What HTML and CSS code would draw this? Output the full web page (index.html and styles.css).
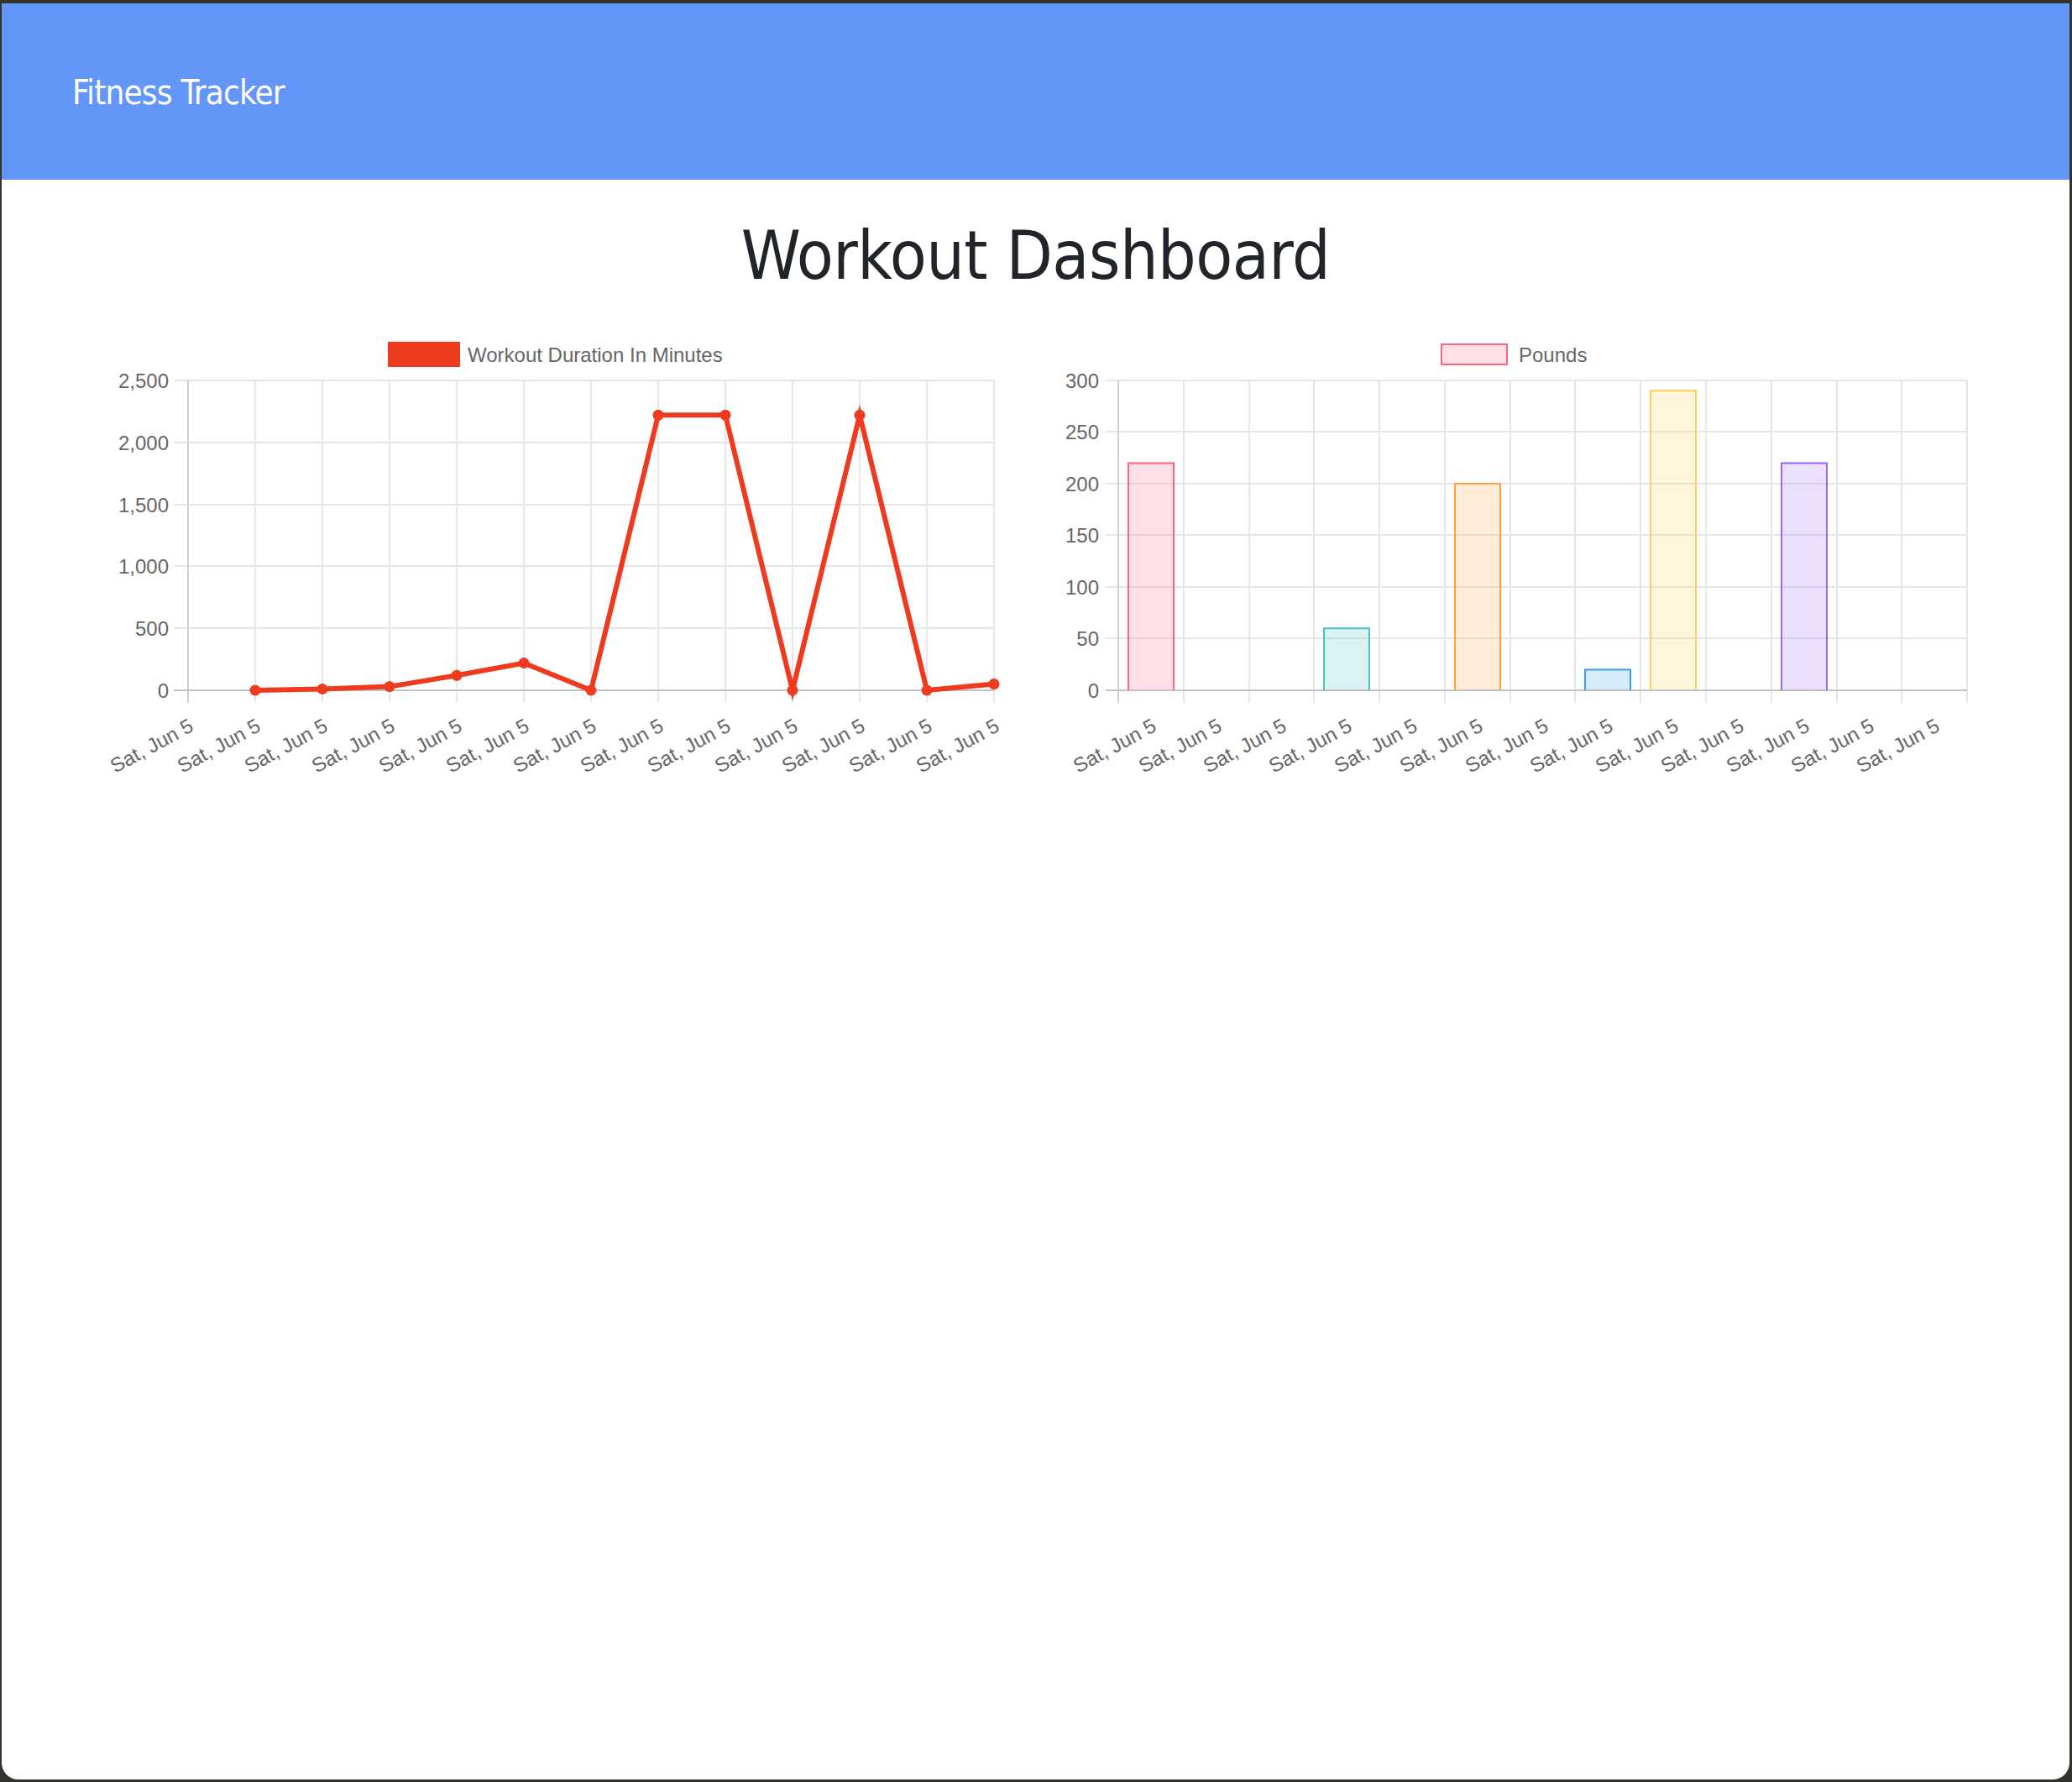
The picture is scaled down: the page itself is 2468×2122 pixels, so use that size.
FILE: index.html
```html
<!DOCTYPE html>
<html lang="en">
<head>
<meta charset="utf-8">
<title>Fitness Tracker</title>
<link rel="stylesheet" href="styles.css">
</head>
<body>
<div class="window">
  <nav class="navbar">
    <span class="brand">Fitness Tracker</span>
  </nav>
  <h1 class="title">Workout Dashboard</h1>
  <div class="charts">
    <svg class="chart" width="1080" height="540" viewBox="0 0 1080 540">
      <rect class="legend-line" x="341" y="20" width="80" height="24"/>
      <text class="legend-text" x="433" y="32">Workout Duration In Minutes</text>

      <g class="grid">
        <line x1="83" x2="1060" y1="63" y2="63"/>
        <line x1="83" x2="1060" y1="137" y2="137"/>
        <line x1="83" x2="1060" y1="211" y2="211"/>
        <line x1="83" x2="1060" y1="284" y2="284"/>
        <line x1="83" x2="1060" y1="358" y2="358"/>
        <line x1="180" x2="180" y1="63" y2="447"/>
        <line x1="260" x2="260" y1="63" y2="447"/>
        <line x1="340" x2="340" y1="63" y2="447"/>
        <line x1="420" x2="420" y1="63" y2="447"/>
        <line x1="500" x2="500" y1="63" y2="447"/>
        <line x1="580" x2="580" y1="63" y2="447"/>
        <line x1="660" x2="660" y1="63" y2="447"/>
        <line x1="740" x2="740" y1="63" y2="447"/>
        <line x1="820" x2="820" y1="63" y2="447"/>
        <line x1="900" x2="900" y1="63" y2="447"/>
        <line x1="980" x2="980" y1="63" y2="447"/>
        <line x1="1060" x2="1060" y1="63" y2="447"/>
      </g>
      <line class="grid-axis" x1="100" x2="100" y1="63" y2="447"/>
      <line class="grid-zero" x1="83" x2="1060" y1="432" y2="432"/>

      <g class="tick-y">
        <text x="77" y="63">2,500</text>
        <text x="77" y="137">2,000</text>
        <text x="77" y="211">1,500</text>
        <text x="77" y="284">1,000</text>
        <text x="77" y="358">500</text>
        <text x="77" y="432">0</text>
      </g>

      <g class="tick-x">
        <text transform="translate(104,472) rotate(-28.5)">Sat, Jun 5</text>
        <text transform="translate(184,472) rotate(-28.5)">Sat, Jun 5</text>
        <text transform="translate(264,472) rotate(-28.5)">Sat, Jun 5</text>
        <text transform="translate(344,472) rotate(-28.5)">Sat, Jun 5</text>
        <text transform="translate(424,472) rotate(-28.5)">Sat, Jun 5</text>
        <text transform="translate(504,472) rotate(-28.5)">Sat, Jun 5</text>
        <text transform="translate(584,472) rotate(-28.5)">Sat, Jun 5</text>
        <text transform="translate(664,472) rotate(-28.5)">Sat, Jun 5</text>
        <text transform="translate(744,472) rotate(-28.5)">Sat, Jun 5</text>
        <text transform="translate(824,472) rotate(-28.5)">Sat, Jun 5</text>
        <text transform="translate(904,472) rotate(-28.5)">Sat, Jun 5</text>
        <text transform="translate(984,472) rotate(-28.5)">Sat, Jun 5</text>
        <text transform="translate(1064,472) rotate(-28.5)">Sat, Jun 5</text>
      </g>

      <polyline class="series-line" points="180,432 260,430.5 340,427.6 420,414.3 500,399.5 580,432 660,104.3 740,104.3 820,432 900,104.3 980,432 1060,424.6"/>
      <g class="series-point">
        <circle cx="180" cy="432" r="6.5"/>
        <circle cx="260" cy="430.5" r="6.5"/>
        <circle cx="340" cy="427.6" r="6.5"/>
        <circle cx="420" cy="414.3" r="6.5"/>
        <circle cx="500" cy="399.5" r="6.5"/>
        <circle cx="580" cy="432" r="6.5"/>
        <circle cx="660" cy="104.3" r="6.5"/>
        <circle cx="740" cy="104.3" r="6.5"/>
        <circle cx="820" cy="432" r="6.5"/>
        <circle cx="900" cy="104.3" r="6.5"/>
        <circle cx="980" cy="432" r="6.5"/>
        <circle cx="1060" cy="424.6" r="6.5"/>
      </g>
    </svg>

    <svg class="chart" width="1080" height="540" viewBox="0 0 1080 540">
      <rect class="legend-bar" x="453" y="20" width="78" height="24"/>
      <text class="legend-text" x="545" y="32">Pounds</text>

      <g class="grid">
        <line x1="53" x2="1079" y1="63" y2="63"/>
        <line x1="53" x2="1079" y1="124" y2="124"/>
        <line x1="53" x2="1079" y1="186" y2="186"/>
        <line x1="53" x2="1079" y1="247" y2="247"/>
        <line x1="53" x2="1079" y1="309" y2="309"/>
        <line x1="53" x2="1079" y1="370" y2="370"/>
        <line x1="146" x2="146" y1="63" y2="447"/>
        <line x1="224" x2="224" y1="63" y2="447"/>
        <line x1="301" x2="301" y1="63" y2="447"/>
        <line x1="379" x2="379" y1="63" y2="447"/>
        <line x1="457" x2="457" y1="63" y2="447"/>
        <line x1="535" x2="535" y1="63" y2="447"/>
        <line x1="612" x2="612" y1="63" y2="447"/>
        <line x1="690" x2="690" y1="63" y2="447"/>
        <line x1="768" x2="768" y1="63" y2="447"/>
        <line x1="846" x2="846" y1="63" y2="447"/>
        <line x1="924" x2="924" y1="63" y2="447"/>
        <line x1="1001" x2="1001" y1="63" y2="447"/>
        <line x1="1079" x2="1079" y1="63" y2="447"/>
      </g>
      <line class="grid-axis" x1="68" x2="68" y1="63" y2="447"/>

      <g class="tick-y">
        <text x="45" y="63">300</text>
        <text x="45" y="124">250</text>
        <text x="45" y="186">200</text>
        <text x="45" y="247">150</text>
        <text x="45" y="309">100</text>
        <text x="45" y="370">50</text>
        <text x="45" y="432">0</text>
      </g>

      <g class="tick-x">
        <text transform="translate(111,472) rotate(-28.5)">Sat, Jun 5</text>
        <text transform="translate(189,472) rotate(-28.5)">Sat, Jun 5</text>
        <text transform="translate(266,472) rotate(-28.5)">Sat, Jun 5</text>
        <text transform="translate(344,472) rotate(-28.5)">Sat, Jun 5</text>
        <text transform="translate(422,472) rotate(-28.5)">Sat, Jun 5</text>
        <text transform="translate(500,472) rotate(-28.5)">Sat, Jun 5</text>
        <text transform="translate(578,472) rotate(-28.5)">Sat, Jun 5</text>
        <text transform="translate(655,472) rotate(-28.5)">Sat, Jun 5</text>
        <text transform="translate(733,472) rotate(-28.5)">Sat, Jun 5</text>
        <text transform="translate(811,472) rotate(-28.5)">Sat, Jun 5</text>
        <text transform="translate(889,472) rotate(-28.5)">Sat, Jun 5</text>
        <text transform="translate(966,472) rotate(-28.5)">Sat, Jun 5</text>
        <text transform="translate(1044,472) rotate(-28.5)">Sat, Jun 5</text>
      </g>

      <line class="grid-zero" x1="53" x2="1079" y1="432" y2="432"/>

      <rect class="bar bar-pink" x="79" y="160.4" width="56" height="271.6"/>
      <path class="bar-edge edge-pink" d="M80,432 V161.4 H134 V432"/>
      <rect class="bar bar-teal" x="312" y="357.2" width="56" height="74.8"/>
      <path class="bar-edge edge-teal" d="M313,432 V358.2 H367 V432"/>
      <rect class="bar bar-orange" x="468" y="185" width="56" height="247"/>
      <path class="bar-edge edge-orange" d="M469,432 V186 H523 V432"/>
      <rect class="bar bar-blue" x="623" y="406.4" width="56" height="25.6"/>
      <path class="bar-edge edge-blue" d="M624,432 V407.4 H678 V432"/>
      <rect class="bar bar-yellow" x="701" y="74.3" width="56" height="357.7"/>
      <path class="bar-edge edge-yellow" d="M702,432 V75.3 H756 V432"/>
      <rect class="bar bar-purple" x="857" y="160.4" width="56" height="271.6"/>
      <path class="bar-edge edge-purple" d="M858,432 V161.4 H912 V432"/>
    </svg>
  </div>
</div>
</body>
</html>
```

FILE: styles.css
```css
html, body {
  margin: 0;
  height: 100%;
}

body {
  background: #34332e;
  padding: 4px 3px 3px 2px;
  box-sizing: border-box;
}

.window {
  height: 100%;
  background: #ffffff;
  border-radius: 0 0 20px 20px;
  overflow: hidden;
}

.navbar {
  height: 210px;
  box-sizing: border-box;
  background: #6396f9;
  padding: 82px 0 0 84px;
}

.brand {
  display: block;
  font-family: "DejaVu Sans Condensed", "DejaVu Sans", sans-serif;
  font-stretch: condensed;
  font-size: 40px;
  line-height: 48px;
  color: #ffffff;
  letter-spacing: -0.8px;
}

.title {
  margin: 43px 0 0;
  font-family: "DejaVu Sans Condensed", "DejaVu Sans", sans-serif;
  font-stretch: condensed;
  font-weight: normal;
  font-size: 80px;
  line-height: 96px;
  color: #212529;
  text-align: center;
  letter-spacing: -0.5px;
}

.charts {
  display: flex;
  justify-content: center;
  gap: 60px;
  margin-top: 37px;
}

.chart {
  display: block;
  width: 1080px;
  height: 540px;
  font-family: "Liberation Sans", Arial, sans-serif;
}

.grid line {
  stroke: #e6e6e6;
  stroke-width: 2;
}

.grid-axis {
  stroke: #cfcfcf;
  stroke-width: 2;
}

.grid-zero {
  stroke: #c4c4c4;
  stroke-width: 2;
}

.tick-y text {
  fill: #666666;
  font-size: 24px;
  text-anchor: end;
  dominant-baseline: central;
}

.tick-x text {
  fill: #666666;
  font-size: 24px;
  text-anchor: end;
  dominant-baseline: central;
}

.legend-text {
  fill: #666666;
  font-size: 24px;
  dominant-baseline: central;
}

.legend-line {
  fill: #ee3a1e;
  stroke: #ee3a1e;
  stroke-width: 6;
}

.legend-bar {
  fill: rgba(255, 99, 132, 0.2);
  stroke: rgb(255, 99, 132);
  stroke-width: 2;
}

.series-line {
  fill: none;
  stroke: #ee3a1e;
  stroke-width: 6;
  stroke-linejoin: miter;
  stroke-miterlimit: 10;
}

.series-point circle {
  fill: #ee3a1e;
}

.bar-edge {
  fill: none;
  stroke-width: 2;
}

.bar-pink { fill: rgba(255, 99, 132, 0.2); }
.edge-pink { stroke: rgb(255, 99, 132); }
.bar-teal { fill: rgba(75, 192, 192, 0.2); }
.edge-teal { stroke: rgb(75, 192, 192); }
.bar-orange { fill: rgba(255, 159, 64, 0.2); }
.edge-orange { stroke: rgb(255, 159, 64); }
.bar-blue { fill: rgba(54, 162, 235, 0.2); }
.edge-blue { stroke: rgb(54, 162, 235); }
.bar-yellow { fill: rgba(255, 206, 86, 0.2); }
.edge-yellow { stroke: rgb(255, 206, 86); }
.bar-purple { fill: rgba(153, 102, 255, 0.2); }
.edge-purple { stroke: rgb(153, 102, 255); }
```
